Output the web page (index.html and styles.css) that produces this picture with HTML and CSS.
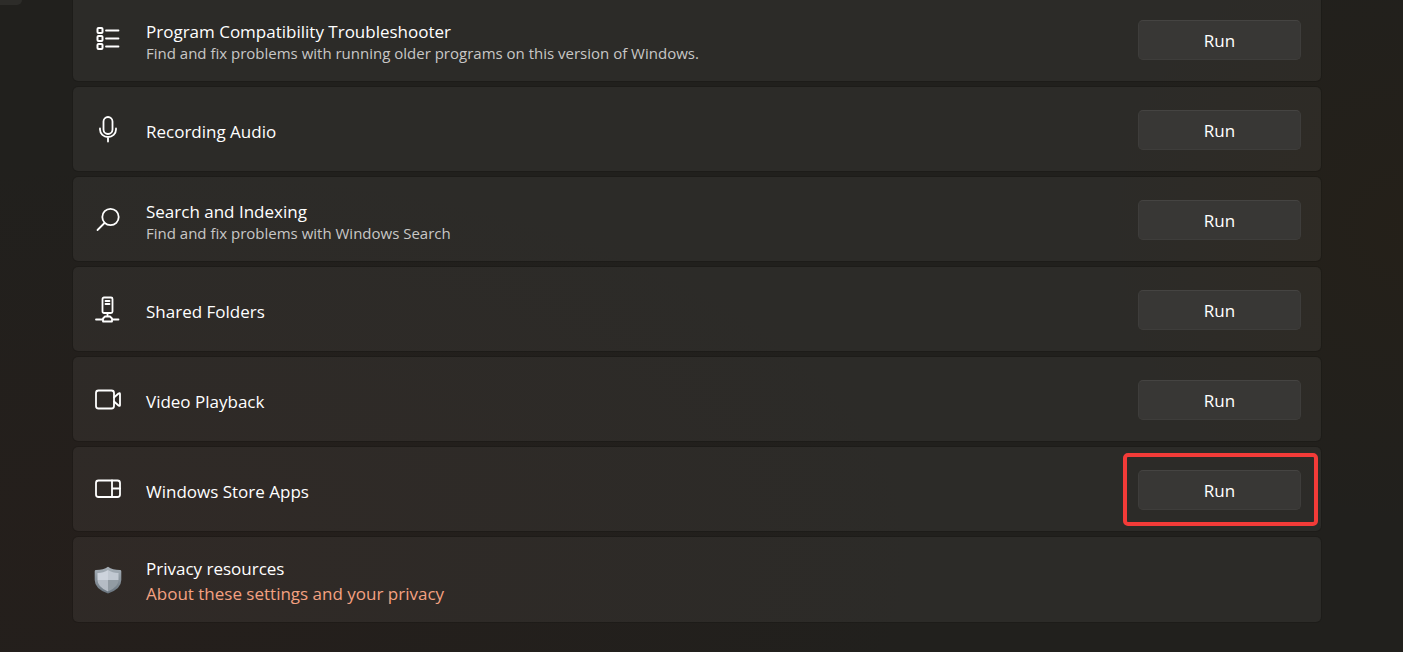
FILE: index.html
```html
<!DOCTYPE html>
<html lang="en">
<head>
<meta charset="utf-8">
<title>Other troubleshooters</title>
<link rel="stylesheet" href="styles.css">
</head>
<body>
<div class="nav-edge"></div>
<main class="list">
  <section class="card card-first">
    <svg class="icon" viewBox="0 0 28 28"><g class="thick"><rect x="3.500" y="3" width="5" height="5" rx="1"/><rect x="3.500" y="11" width="5" height="5" rx="1"/><rect x="3.500" y="19" width="5" height="5" rx="1"/></g><path d="M12 5.500h12.500M12 13.500h12.500M12 21.500h12.500"/></svg>
    <div class="text"><h2 class="title">Program Compatibility Troubleshooter</h2><p class="desc">Find and fix problems with running older programs on this version of Windows.</p></div>
    <div class="action"><button class="run" type="button">Run</button></div>
  </section>
  <section class="card">
    <svg class="icon" viewBox="0 0 28 28"><rect x="9.500" y="2" width="9" height="17" rx="4.500"/><path d="M6 13.500v1a8 7.500 0 0 0 16 0v-1M14 22v4.500"/></svg>
    <div class="text text-single"><h2 class="title">Recording Audio</h2></div>
    <div class="action"><button class="run" type="button">Run</button></div>
  </section>
  <section class="card">
    <svg class="icon" viewBox="0 0 28 28"><circle cx="16.500" cy="12" r="8.200"/><path d="M10.500 18L3.500 25"/></svg>
    <div class="text"><h2 class="title">Search and Indexing</h2><p class="desc">Find and fix problems with Windows Search</p></div>
    <div class="action"><button class="run" type="button">Run</button></div>
  </section>
  <section class="card">
    <svg class="icon" viewBox="0 0 28 28"><rect x="8.500" y="2.500" width="10" height="15.500" rx="1.500"/><path d="M11.500 6h4M11.500 9h4M13.500 18v3M2 24.500h7M18 24.500h6.500M11 21.500h5l2 2v3H9v-3z"/></svg>
    <div class="text text-single"><h2 class="title">Shared Folders</h2></div>
    <div class="action"><button class="run" type="button">Run</button></div>
  </section>
  <section class="card">
    <svg class="icon" viewBox="0 0 28 28"><rect x="2" y="5.500" width="18" height="18" rx="2.500"/><path d="M20 12.500l4.500-4q1.500-1 1.500 .5v11q0 1.500-1.500 .5L20 16.500"/></svg>
    <div class="text text-single"><h2 class="title">Video Playback</h2></div>
    <div class="action"><button class="run" type="button">Run</button></div>
  </section>
  <section class="card">
    <svg class="icon" viewBox="0 0 28 28"><rect x="2" y="5.500" width="24" height="16.500" rx="2.500"/><path d="M18 5.500v16.500M18 13.500h8"/></svg>
    <div class="text text-single"><h2 class="title">Windows Store Apps</h2></div>
    <div class="action"><button class="run" type="button">Run</button><span class="highlight"></span></div>
  </section>
  <section class="card">
    <svg class="icon shield" viewBox="0 0 28 28">
      <defs><linearGradient id="rim" x1="0" y1="0" x2="0" y2="1"><stop offset="0" stop-color="#a9b2ba"/><stop offset="1" stop-color="#69747e"/></linearGradient><clipPath id="inner"><path d="M14 4Q18.500 7 24.500 7v7q0 7-10.500 11.500Q3.500 21 3.500 14V7Q9.500 7 14 4z"/></clipPath></defs>
      <path fill="url(#rim)" d="M14 .8Q18.500 4 26 4q1.300 0 1.300 1.300V14q0 9-13.300 13.500Q.7 23 .7 14V5.300Q.7 4 2 4 9.500 4 14 .8z"/>
      <g clip-path="url(#inner)"><path fill="#cdd3dc" d="M0 0h14v14H0z"/><path fill="#c1c8d1" d="M14 0h14v14H14z"/><path fill="#b5bcc5" d="M0 14h14v14H0z"/><path fill="#929ba3" d="M14 14h14v14H14z"/></g>
    </svg>
    <div class="text"><h2 class="title">Privacy resources</h2><a class="link" href="#">About these settings and your privacy</a></div>
  </section>
</main>
</body>
</html>
```
FILE: styles.css
```css
* { box-sizing: border-box; }
body {
  margin: 0;
  min-height: 100vh;
  font-family: "Segoe UI", "Open Sans", "Noto Sans", sans-serif;
  color: #fff;
  background:
    radial-gradient(ellipse 800px 400px at 10% 85%, rgba(44, 28, 24, .35), transparent),
    radial-gradient(ellipse 300px 300px at 100% 35%, rgba(44, 32, 16, .3), transparent),
    #21201d;
}
.nav-edge {
  position: absolute;
  top: 0;
  left: 0;
  width: 22px;
  height: 5px;
  border-radius: 0 0 5px 0;
  background: #2d2c29;
}
.list {
  display: flex;
  flex-direction: column;
  gap: 6px;
  padding: 0 82px 30px 73px;
}
.card {
  display: flex;
  align-items: center;
  min-height: 84px;
  padding: 2px 20px 0 21px;
  border-radius: 5px;
  background: rgba(255, 255, 255, .05);
  box-shadow: 0 0 0 1px rgba(0, 0, 0, .12);
}
.card-first {
  min-height: 81px;
  padding-top: 0;
  padding-bottom: 1px;
  border-radius: 0 0 5px 5px;
}
.card:last-child { min-height: 85px; }
.icon {
  flex: none;
  width: 28px;
  height: 28px;
  margin: 0 24px 2px 0;
  fill: none;
  stroke: #fff;
  stroke-width: 1.800;
  stroke-linecap: round;
  stroke-linejoin: round;
}
.thick { stroke-width: 2; }
.shield { stroke: none; }
.text { flex: 1; min-width: 0; padding-top: 2px; }
.text-single { padding-top: 4px; }
.title {
  margin: 0;
  font-size: 17px;
  line-height: 24px;
  font-weight: 400;
}
.desc {
  margin: 0;
  font-size: 15px;
  line-height: 18px;
  color: #c8c7c6;
}
.link {
  display: inline-block;
  font-size: 17px;
  line-height: 25px;
  color: #f4a181;
  text-decoration: none;
}
.action { position: relative; display: flex; }
.run {
  width: 163px;
  height: 40px;
  padding: 0;
  border: 1px solid #3e3d3b;
  border-top-color: #454442;
  border-radius: 5px;
  background: #383735;
  color: #fff;
  font: inherit;
  font-size: 17px;
}
.highlight {
  position: absolute;
  inset: -17px -17px -16px -15px;
  border: 4px solid #f33b38;
  border-radius: 5px;
  pointer-events: none;
}
```
